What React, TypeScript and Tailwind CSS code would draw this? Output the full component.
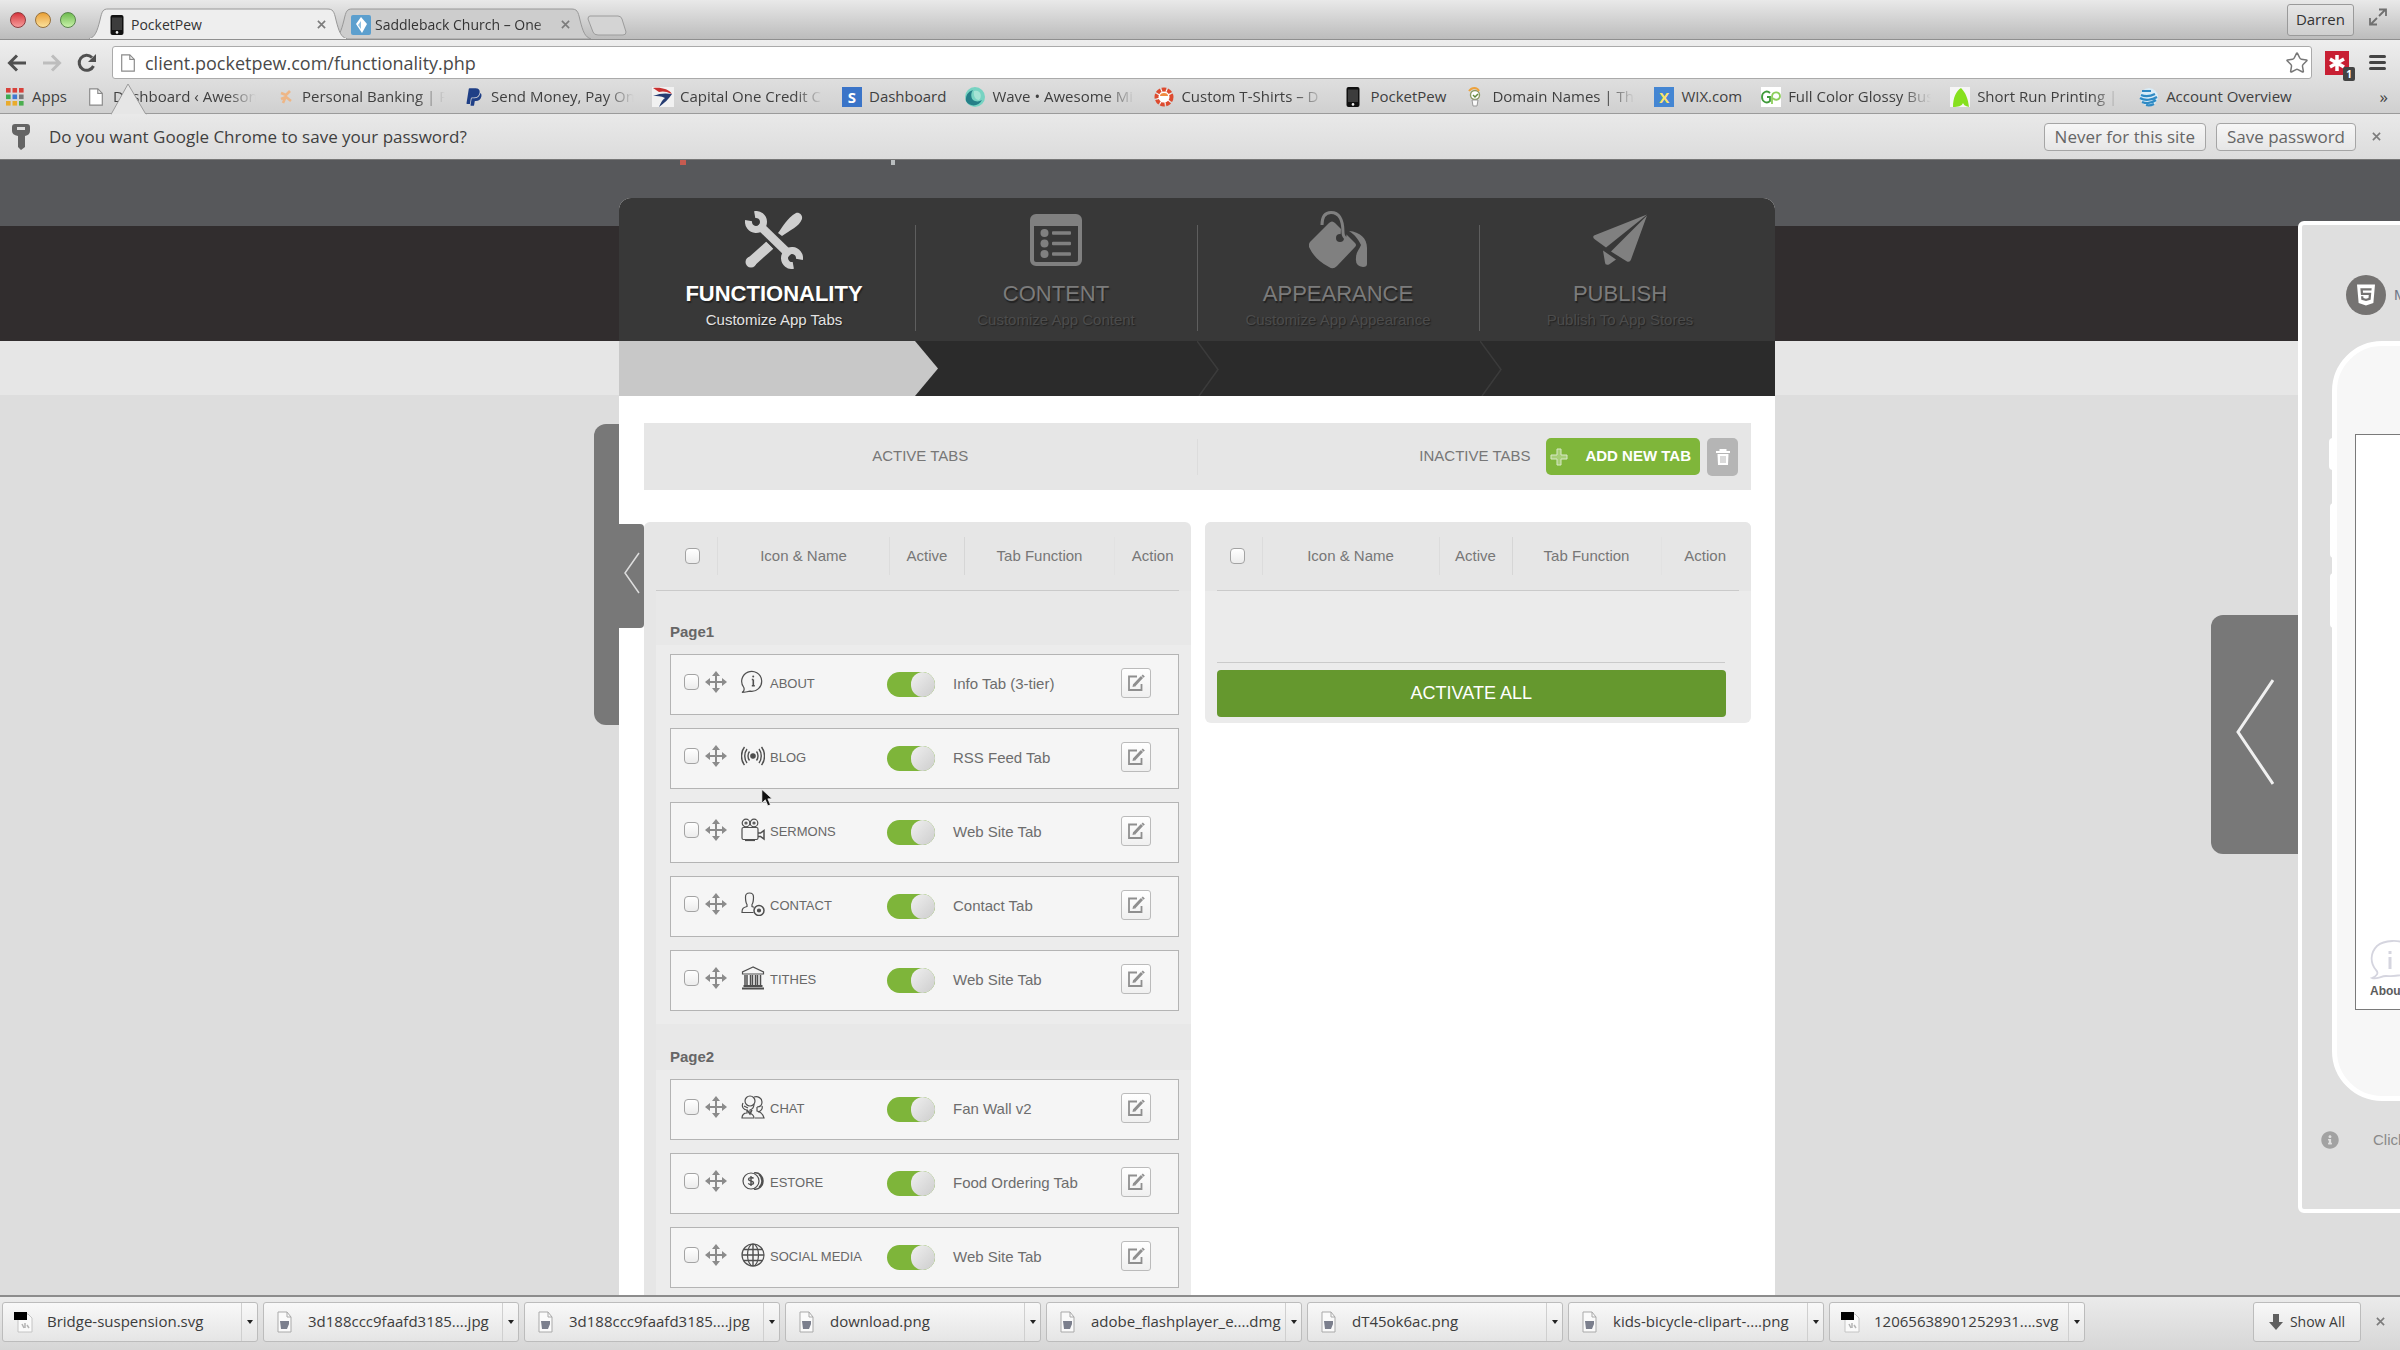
import type { ReactNode } from 'react';
import clsx from 'clsx';
import { FaHtml5, FaInfoCircle, FaPaypal } from 'react-icons/fa';
import { Star } from 'lucide-react';

const CHROME_FONT = "font-['Open_Sans','Lucida_Grande',sans-serif]";
const PAGE_FONT = "font-['Liberation_Sans',Arial,sans-serif]";

/* ---------- Small icons ---------- */

function FileIcon() {
  return (
    <svg viewBox="0 0 16 20" className="h-[18px] w-4">
      <path d="M1 1h9l5 5v13H1z" fill="#fff" stroke="#8a8a8a" strokeWidth="1.3" />
      <path d="M10 1v5h5" fill="none" stroke="#8a8a8a" strokeWidth="1.3" />
    </svg>
  );
}

function PhoneIcon() {
  return (
    <svg viewBox="0 0 13 20" className="h-5 w-[14px]">
      <rect width="13" height="20" rx="2" fill="#111" />
      <rect x="1.5" y="2.5" width="10" height="12.5" fill="#3c3c3c" />
      <circle cx="6.5" cy="17.4" r="1.3" fill="#eee" />
    </svg>
  );
}

function AppsIcon() {
  const colors = ['#d8413a', '#d8413a', '#d8413a', '#3cab52', '#3f78d1', '#777', '#e9ab2c', '#e9ab2c', '#4cae50'];
  return (
    <svg viewBox="0 0 18 18" className="h-[18px] w-[18px]">
      {colors.map((c, i) => (
        <rect key={i} x={(i % 3) * 6.5} y={Math.floor(i / 3) * 6.5} width="4.6" height="4.6" fill={c} />
      ))}
    </svg>
  );
}

function SquiggleIcon() {
  return (
    <svg viewBox="0 0 20 20" className="h-5 w-5">
      <path d="M6 6l5 2 4-4M6 12l5-2 5 4M8 16l3-7" stroke="#f2b078" strokeWidth="2.6" fill="none" opacity=".85" />
    </svg>
  );
}

function CapitalIcon() {
  return (
    <svg viewBox="0 0 22 20" className="h-5 w-[22px]">
      <rect width="22" height="20" fill="#f1f1f1" />
      <path d="M1 1c8-1 16 1 19 6-6-3-10-3-13-2z" fill="#c9302f" />
      <path d="M1 9c7-3 13-3 19-2-3 5-8 9-13 13 2-5 4-8 6-9-4-2-8-2-12-2z" fill="#253c72" />
    </svg>
  );
}

function SquareIcon({ bg, letter, color }: { bg: string; letter: string; color: string }) {
  return (
    <span className={clsx('flex h-5 w-5 items-center justify-center text-[15px] font-bold leading-5', bg, color)}>
      {letter}
    </span>
  );
}

function GlossyIcon() {
  return (
    <svg viewBox="0 0 20 20" className="h-5 w-5">
      <rect width="20" height="20" fill="#fff" />
      <path d="M9 6C6 3 1 5 1 10s5 7 8 4v-4H6" stroke="#3f9a3a" strokeWidth="1.8" fill="none" />
      <path d="M11 17V10c0-6 8-6 8-1 0 4-5 5-7 2" stroke="#8ccf5a" strokeWidth="1.8" fill="none" />
    </svg>
  );
}

function WaveIcon() {
  return (
    <svg viewBox="0 0 20 20" className="h-5 w-5">
      <circle cx="10" cy="10" r="10" fill="#77d3c2" />
      <path d="M1 14A9.5 9.5 0 0 1 8 3c-3 4-2 10 2 11 3 1 5 0 7-1-3 7-13 7-16 1z" fill="#257f88" />
      <path d="M9 4c6-2 9 5 5 9-4 0-6-5-5-9z" fill="#a5e3d5" />
    </svg>
  );
}

function RingIcon() {
  return (
    <svg viewBox="0 0 20 20" className="h-5 w-5">
      <circle cx="10" cy="10" r="7.5" fill="#fff" stroke="#dd4b2f" strokeWidth="4" strokeDasharray="4.2 1.3" />
      <path d="M6 9a4 3 0 0 1 8 0z" fill="#f08b43" />
    </svg>
  );
}

function DomainIcon() {
  return (
    <svg viewBox="0 0 16 20" className="h-5 w-4">
      <circle cx="8" cy="8" r="4.5" fill="#fff" stroke="#8d9b63" strokeWidth="1.4" />
      <path d="M2 4c3-4 8-4 10 0" stroke="#eda23d" strokeWidth="2" fill="none" />
      <path d="M5 13h6l-1 6H6z" fill="#fafafa" stroke="#999" />
      <path d="M6 8l2 2 3-3" stroke="#61883a" strokeWidth="1.5" fill="none" />
    </svg>
  );
}

function LeafIcon() {
  return (
    <svg viewBox="0 0 20 20" className="h-5 w-5">
      <rect width="20" height="20" fill="#f6f6f6" />
      <path d="M3 20C3 11 6 4 11 1c5 5 7 11 8 19-4-1-5-2-6-4-1 3-5 4-10 4z" fill="#86e01e" />
    </svg>
  );
}

function GlobeStripes() {
  return (
    <svg viewBox="0 0 20 20" className="h-5 w-5">
      <circle cx="10" cy="10" r="9" fill="#d9ecf7" />
      <path d="M3 4h9M2 8c5 2 10 1 14-1M1 11c5 3 12 2 17-1M3 15c5 2 10 1 14-2M7 18c3 1 6 0 8-1" stroke="#2f8ac4" strokeWidth="2.2" fill="none" />
    </svg>
  );
}

function MoveIcon() {
  return (
    <svg viewBox="0 0 22 22" className="h-[22px] w-[22px]" fill="#8b8b8b">
      <path d="M10 4h2v6h6v2h-6v6h-2v-6H4v-2h6z" />
      <path d="M11 0l4 5H7zM11 22l-4-5h8zM0 11l5-4v8zM22 11l-5 4V7z" />
    </svg>
  );
}

function EditIcon() {
  return (
    <svg viewBox="0 0 18 18" className="h-[18px] w-[18px]" fill="none" stroke="#8f8f8f">
      <path d="M10 2.5H2v13.5h12.5V10" strokeWidth="1.8" />
      <path d="M7 11.5L15 3" strokeWidth="3" />
      <path d="M5.5 13l.6-3 2.4 2.2z" fill="#8f8f8f" stroke="none" />
      <path d="M15.2 1.2l2 2" strokeWidth="1.8" />
    </svg>
  );
}

function TrashIcon() {
  return (
    <svg viewBox="0 0 14 16" className="h-4 w-[14px]">
      <path d="M0 3h14M4.500 2.500V1h5v1.500" stroke="#fff" strokeWidth="2" fill="none" />
      <path d="M1.500 5h11L12 16H2z" fill="#fff" />
      <path d="M5 7v7M7 7v7M9 7v7" stroke="#b5b5b5" strokeWidth="1" />
    </svg>
  );
}

/* ---------- Tab icons ---------- */

function LineIcon({ children }: { children: ReactNode }) {
  return (
    <svg viewBox="0 0 24 24" className="h-6 w-6" fill="none" stroke="#4f4f4f" strokeWidth="1.2">
      {children}
    </svg>
  );
}

const infoIcon = (
  <LineIcon>
    <path d="M1 22.500c2-1 2.500-3 1.800-5A10 10 0 1 1 9 21.200c-2.500.3-5 1.300-8 1.300z" />
    <path d="M12.300 9.500v6M10.800 15.800h3M10.800 9.500h1.500" strokeWidth="1.600" />
    <circle cx="12.200" cy="6.500" r="1" fill="#4f4f4f" stroke="none" />
  </LineIcon>
);

const blogIcon = (
  <LineIcon>
    <circle cx="12" cy="12" r="2.200" fill="#4f4f4f" />
    <path d="M8.500 7.500c-2 2.500-2 6.500 0 9M15.500 7.500c2 2.500 2 6.500 0 9M6 5c-3 4-3 10 0 14M18 5c3 4 3 10 0 14M3.500 3c-4 5-4 13 0 18M20.500 3c4 5 4 13 0 18" strokeWidth="1.400" />
  </LineIcon>
);

const cameraIcon = (
  <LineIcon>
    <circle cx="5" cy="5" r="3.800" />
    <circle cx="13" cy="5" r="3.800" />
    <circle cx="5" cy="5" r="1" />
    <circle cx="13" cy="5" r="1" />
    <rect x="1" y="9.500" width="16" height="12" rx="1.500" />
    <path d="M17 15h2.500l3.500-2.500v8.500l-3.500-2.500H17" strokeWidth="1.500" />
    <path d="M4 22.500h10" />
  </LineIcon>
);

const contactIcon = (
  <LineIcon>
    <path d="M12.500 20.500H1c0-4 1-5 5-6v-2C4.500 10.500 4.500 8 4.500 5 4.500 2 6 1 8.500 1S12.500 2 12.500 5c0 3 0 5.500-1.500 7.500v2l2 .7" />
    <circle cx="18" cy="18.500" r="5" strokeWidth="1.500" />
    <circle cx="18" cy="18.500" r="1.500" fill="#4f4f4f" />
  </LineIcon>
);

const bankIcon = (
  <LineIcon>
    <path d="M12 1L1.500 6v2h21V6z" />
    <path d="M4 9v10M6 9v10M9.500 9v10M11.500 9v10M14.500 9v10M16.500 9v10M19.500 9v10" strokeWidth="1.500" />
    <path d="M2.500 20h19M1 22.500h22" strokeWidth="1.800" />
  </LineIcon>
);

const chatIcon = (
  <LineIcon>
    <circle cx="9" cy="6" r="5" />
    <path d="M13 2c4-1 8 1 8 5s-3 5-5 5M2 8c-2 4 1 7 4 7v3c-3 0-5 2-5 5h12c0-3-2-4-4-5v-3c3-1 4-3 4-6" />
    <path d="M16 12v4c4 1 6 3 7 7h-9M21 11c1 3-1 5-4 6M3 11l4 2" />
    <path d="M6 15l3 4 2-4" strokeWidth="1.500" />
  </LineIcon>
);

const storeIcon = (
  <LineIcon>
    <circle cx="10" cy="12" r="8" />
    <path d="M13 4c5-1 9 3 9 8s-4 9-9 8M18 5.500c4 3 4 10 0 13" strokeWidth="1.500" />
    <path d="M12.500 9.500c-1-1.500-5-1.200-5 .7 0 2.200 5 1.300 5 3.600 0 2-4 2.200-5.200.5M10 7v10" strokeWidth="1.400" />
  </LineIcon>
);

const globeIcon = (
  <LineIcon>
    <circle cx="12" cy="12" r="11" />
    <ellipse cx="12" cy="12" rx="5.500" ry="11" />
    <path d="M12 1v22M1 12h22M3 6.500h18M3 17.500h18" strokeWidth="1.400" />
  </LineIcon>
);

/* ---------- Step icons ---------- */

const toolsIcon = (
  <svg viewBox="0 0 58 58" className="h-[58px] w-[58px]">
    <path d="M6 51L25 34" stroke="#cfcfcf" strokeWidth="10" />
    <circle cx="6" cy="51" r="5.500" fill="#cfcfcf" />
    <path d="M33 22c4-5 9-15 18-20 3-1 7 2 6 6-3 8-12 11-20 17z" fill="#cfcfcf" />
    <path d="M14 15L45 44" stroke="#383838" strokeWidth="13" />
    <path d="M14 14L45 44" stroke="#cfcfcf" strokeWidth="8.500" />
    <path d="M9.700 3.600A7.500 7.500 0 1 1 3.600 9.700M48.300 54.400A7.500 7.500 0 1 1 54.400 48.300" stroke="#cfcfcf" strokeWidth="7" fill="none" />
  </svg>
);

const listIcon = (
  <svg viewBox="0 0 52 52" className="h-[52px] w-[52px]">
    <rect x="2" y="2" width="48" height="48" rx="4" fill="none" stroke="#808080" strokeWidth="4" />
    <rect x="2" y="2" width="48" height="10" fill="#808080" />
    {[19, 29.5, 40].map((y) => (
      <g key={y} fill="#808080">
        <circle cx="14.500" cy={y} r="4" />
        <rect x="22" y={y - 1.8} width="19" height="3.600" rx="1" />
      </g>
    ))}
  </svg>
);

const bucketIcon = (
  <svg viewBox="0 0 58 58" className="h-[58px] w-[58px]">
    <path d="M1 31L20 12q3-3 6 0l20 20q2 2 0 4L28 55q-4 4-8 1Q6 49 0 36q-1-2 1-5z" fill="#808080" />
    <path d="M34 12c2 5 1 10 0 15" stroke="#383838" strokeWidth="6" fill="none" />
    <circle cx="31" cy="27" r="4" fill="#383838" />
    <path d="M13 14C13 5 17 1.500 22 1.500c9 0 12 8 12 20 0 3 1 5 4 7" stroke="#808080" strokeWidth="3" fill="none" />
    <path d="M40 20c11 1 18 7 18 17v16q0 3-4 3-8-1-7-9c0-6 3-8 5-13-3-6-6-10-12-14z" fill="#808080" />
  </svg>
);

const planeIcon = (
  <svg viewBox="0 0 54 51" className="h-[52px] w-[54px]" fill="#808080">
    <path d="M54 0L1 21q-2 2 1 4l11 8L48 5z" />
    <path d="M54 1L18 37l16 10q3 1 4-2z" />
    <path d="M10 36l13 9-7 5q-4 1-4-2z" />
  </svg>
);

/* ---------- Data ---------- */

const bookmarks: { label: string; icon: ReactNode; fade?: boolean }[] = [
  { label: 'Apps', icon: <AppsIcon /> },
  { label: 'Dashboard ‹ Aweson', icon: <FileIcon />, fade: true },
  { label: 'Personal Banking | P', icon: <SquiggleIcon />, fade: true },
  { label: 'Send Money, Pay On', icon: <FaPaypal className="h-5 w-4 text-[#1f3f86]" />, fade: true },
  { label: 'Capital One Credit C', icon: <CapitalIcon />, fade: true },
  { label: 'Dashboard', icon: <SquareIcon bg="bg-[#3a74c8]" letter="S" color="text-white" /> },
  { label: 'Wave • Awesome Mi', icon: <WaveIcon />, fade: true },
  { label: 'Custom T-Shirts – D', icon: <RingIcon />, fade: true },
  { label: 'PocketPew', icon: <PhoneIcon /> },
  { label: 'Domain Names | The', icon: <DomainIcon />, fade: true },
  { label: 'WIX.com', icon: <SquareIcon bg="bg-[#4486d3]" letter="X" color="text-[#fbe46a]" /> },
  { label: 'Full Color Glossy Bus', icon: <GlossyIcon />, fade: true },
  { label: 'Short Run Printing |', icon: <LeafIcon />, fade: true },
  { label: 'Account Overview', icon: <GlobeStripes /> },
];

const steps = [
  { title: 'FUNCTIONALITY', sub: 'Customize App Tabs', icon: toolsIcon, active: true },
  { title: 'CONTENT', sub: 'Customize App Content', icon: listIcon },
  { title: 'APPEARANCE', sub: 'Customize App Appearance', icon: bucketIcon },
  { title: 'PUBLISH', sub: 'Publish To App Stores', icon: planeIcon },
];

const pages = [
  {
    name: 'Page1',
    tabs: [
      { name: 'ABOUT', fn: 'Info Tab (3-tier)', icon: infoIcon },
      { name: 'BLOG', fn: 'RSS Feed Tab', icon: blogIcon },
      { name: 'SERMONS', fn: 'Web Site Tab', icon: cameraIcon },
      { name: 'CONTACT', fn: 'Contact Tab', icon: contactIcon },
      { name: 'TITHES', fn: 'Web Site Tab', icon: bankIcon },
    ],
  },
  {
    name: 'Page2',
    tabs: [
      { name: 'CHAT', fn: 'Fan Wall v2', icon: chatIcon },
      { name: 'ESTORE', fn: 'Food Ordering Tab', icon: storeIcon },
      { name: 'SOCIAL MEDIA', fn: 'Web Site Tab', icon: globeIcon },
    ],
  },
];

const downloads = [
  { name: 'Bridge-suspension.svg', svg: true },
  { name: '3d188ccc9faafd3185....jpg' },
  { name: '3d188ccc9faafd3185....jpg' },
  { name: 'download.png' },
  { name: 'adobe_flashplayer_e....dmg' },
  { name: 'dT45ok6ac.png' },
  { name: 'kids-bicycle-clipart-....png' },
  { name: '12065638901252931....svg', svg: true },
];

/* ---------- Browser chrome ---------- */

function CloseX({ label }: { label: string }) {
  return (
    <button aria-label={label} className="flex h-4 w-4 items-center justify-center">
      <svg viewBox="0 0 10 10" className="h-[9px] w-[9px]">
        <path d="M1 1l8 8M9 1L1 9" stroke="#7c7c7c" strokeWidth="1.800" />
      </svg>
    </button>
  );
}

function BrowserTab({ title, icon, active }: { title: string; icon: ReactNode; active?: boolean }) {
  return (
    <div className={clsx('relative h-[31px] w-[258px]', active ? 'z-10' : '-ml-[14px]')}>
      <svg viewBox="0 0 258 31" preserveAspectRatio="none" className="absolute inset-0 h-full w-full">
        <path
          d="M0 31C6 29 8 24 11 12 13 3 14 1 19 1H238c6 0 7 2 9 11 3 12 5 17 11 19z"
          fill={active ? '#eeeeee' : '#cdcdcd'}
          stroke="#989898"
        />
        {active && <path d="M1 31h256" stroke="#eeeeee" strokeWidth="2" />}
      </svg>
      <div className="relative flex h-full items-center gap-1 pl-[18px] pr-[17px] pt-[2px]">
        <span className="flex w-5 justify-center">{icon}</span>
        <span
          className={clsx(
            'w-[178px] overflow-hidden whitespace-nowrap text-[14px] text-[#333]',
            !active && 'mask-r-from-90%'
          )}
        >
          {title}
        </span>
        <CloseX label={`Close ${title}`} />
      </div>
    </div>
  );
}

function TitleBar() {
  return (
    <div className="flex h-10 items-end border-b border-[#8f8f8f] bg-linear-to-b from-[#e9e9e9] to-[#bcbcbc] pl-[10px]">
      <div className="flex gap-[9px] self-center pr-[13px]">
        <span className="h-4 w-4 rounded-full border border-[#8d3a3d] bg-linear-to-b from-[#d5303d] to-[#f59a9c]" />
        <span className="h-4 w-4 rounded-full border border-[#98713a] bg-linear-to-b from-[#e9a032] to-[#fbe19a]" />
        <span className="h-4 w-4 rounded-full border border-[#57854a] bg-linear-to-b from-[#6dbb4e] to-[#c9f2a9]" />
      </div>
      <BrowserTab title="PocketPew" icon={<PhoneIcon />} active />
      <BrowserTab
        title="Saddleback Church – One"
        icon={
          <svg viewBox="0 0 20 20" className="h-5 w-5">
            <rect width="20" height="20" rx="2" fill="#5c9fce" />
            <path d="M10 2l6 7-5 9-6-9z" fill="#fff" />
            <path d="M10 6v8l-3-4z" fill="#8fc1e2" />
          </svg>
        }
      />
      <button aria-label="New tab" className="-ml-1 mb-[3px]">
        <svg viewBox="0 0 40 21" className="h-[21px] w-10">
          <path d="M3 1h28q3 0 4 3l4 13q0 3-3 3H11q-4 0-5-3L1 4q0-3 2-3z" fill="#d4d4d4" stroke="#9c9c9c" />
        </svg>
      </button>
      <div className="ml-auto flex h-full items-center gap-[14px] pr-3">
        <button className="h-8 rounded-[3px] border border-[#9a9a9a] bg-linear-to-b from-[#e6e6e6] to-[#cfcfcf] px-2 text-[15px] text-[#333]">
          Darren
        </button>
        <button aria-label="Full screen" className="pb-1.5">
          <svg viewBox="0 0 20 18" className="h-[18px] w-5" stroke="#707070" strokeWidth="1.800" fill="none">
            <path d="M11 8l6-6M11 1.500h7V8M9 10l-6 6M2 10v6.500h7" />
          </svg>
        </button>
      </div>
    </div>
  );
}

function Toolbar() {
  return (
    <div className="flex h-10 items-center bg-linear-to-b from-[#eeeeee] to-[#dedede] pr-[14px] pt-[5px]">
      <div className="flex w-[112px] items-center gap-[15px] pl-[7px]">
        <button aria-label="Back">
          <svg viewBox="0 0 20 18" className="h-[18px] w-5" stroke="#505050" strokeWidth="3" fill="none">
            <path d="M19 9H3M10 1.500L2.500 9l7.500 7.500" />
          </svg>
        </button>
        <button aria-label="Forward">
          <svg viewBox="0 0 20 18" className="h-[18px] w-5" stroke="#bdbdbd" strokeWidth="3" fill="none">
            <path d="M1 9h16M10 1.500L17.500 9 10 16.500" />
          </svg>
        </button>
        <button aria-label="Reload">
          <svg viewBox="0 0 20 20" className="h-5 w-5">
            <path d="M16.500 13A7.500 7.500 0 1 1 15 4.500" stroke="#505050" strokeWidth="3" fill="none" />
            <path d="M19 1v8h-8z" fill="#505050" />
          </svg>
        </button>
      </div>
      <div className="flex h-[33px] flex-1 items-center gap-[9px] rounded-[3px] border border-[#aaa] bg-white pl-[7px] pr-[2px]">
        <FileIcon />
        <input
          aria-label="Address"
          defaultValue="client.pocketpew.com/functionality.php"
          className="h-7 flex-1 bg-transparent text-[18px] text-[#4a4a4a] outline-none"
        />
        <Star className="h-6 w-6 text-[#777]" strokeWidth={1.5} />
      </div>
      <button aria-label="Extension" className="relative ml-[13px] flex h-6 w-6 items-center justify-center bg-[#c81f33] text-white">
        <svg viewBox="0 0 16 16" className="h-4 w-4" stroke="#fff" strokeWidth="3.500">
          <path d="M8 0v16M1 4l14 8M15 4L1 12" />
        </svg>
        <span className="absolute -bottom-1.5 -right-1.5 h-[14px] w-3 rounded-[2px] bg-[#444] text-[10px] font-bold leading-[14px]">1</span>
      </button>
      <button aria-label="Menu" className="ml-5 flex w-[17px] flex-col gap-[3px]">
        <span className="h-[3px] rounded bg-[#444]" />
        <span className="h-[3px] rounded bg-[#444]" />
        <span className="h-[3px] rounded bg-[#444]" />
      </button>
    </div>
  );
}

function BookmarksBar() {
  return (
    <nav className="flex h-[34px] items-center gap-[18px] border-b border-[#9b9b9b] bg-linear-to-b from-[#dedede] to-[#d0d0d0] pl-1 pr-3">
      {bookmarks.map(({ label, icon, fade }, i) => (
        <a key={i} href="#" className="flex items-center gap-1.5 text-[15px] text-[#3f3f3f]">
          <span className="flex w-[22px] shrink-0 justify-center">{icon}</span>
          <span className={clsx('whitespace-nowrap', fade && 'w-[143px] mask-r-from-80%')}>{label}</span>
        </a>
      ))}
      <button aria-label="More bookmarks" className="ml-auto text-[17px] text-[#444]">
        »
      </button>
    </nav>
  );
}

function PasswordBar() {
  return (
    <div className="relative flex h-[46px] items-center border-b border-[#777] bg-linear-to-b from-[#e9e9e9] to-[#dcdcdc] pl-3 pr-4 text-[17px] text-[#3f3f3f]">
      <svg viewBox="0 0 36 33" className="absolute -top-[31px] left-[111px] h-[33px] w-9">
        <path d="M0 31.500L17 1l18 30.500" fill="#e6e6e6" stroke="#9b9b9b" />
        <path d="M1 32h34" stroke="#e9e9e9" strokeWidth="2" />
      </svg>
      <svg viewBox="0 0 18 26" className="h-[26px] w-[18px]">
        <path d="M3 0h12q3 0 3 3v4q0 4-5 5v11l-4 3-3-3V12Q0 11 0 7V3q0-3 3-3z" fill="#646464" />
        <rect x="5" y="3" width="8" height="3" fill="#dcdcdc" />
      </svg>
      <p className="pl-[19px]">Do you want Google Chrome to save your password?</p>
      <div className="ml-auto flex items-center gap-[10px] text-[#666]">
        <button className="h-7 rounded border border-[#a5a5a5] bg-linear-to-b from-[#f7f7f7] to-[#e6e6e6] px-[10px] leading-6">
          Never for this site
        </button>
        <button className="mr-[2px] h-7 rounded border border-[#a5a5a5] bg-linear-to-b from-[#f7f7f7] to-[#e6e6e6] px-[10px] leading-6">
          Save password
        </button>
        <CloseX label="Dismiss" />
      </div>
    </div>
  );
}

function DownloadBar() {
  return (
    <footer
      className={clsx(
        'flex h-[55px] shrink-0 items-center gap-[5px] border-t-2 border-[#8c8c8c] bg-linear-to-b from-[#ebebeb] to-[#d6d6d6] pb-1 pl-[2px] pr-3 text-[15px] text-[#3c3c3c]',
        CHROME_FONT
      )}
    >
      {downloads.map(({ name, svg }, i) => (
        <div key={i} className="flex h-10 w-64 items-stretch rounded-[3px] border border-[#bcbcbc] bg-linear-to-b from-[#f8f8f8] to-[#e5e5e5]">
          <button className="flex flex-1 items-center gap-[13px] pl-[11px] text-left">
            {svg ? (
              <svg viewBox="0 0 20 22" className="h-[22px] w-5">
                <path d="M4 3h10l4 4v14H4z" fill="#fafafa" stroke="#c4c4c4" />
                <path d="M8 13l2 4M11 12v5M13 14l2 3" stroke="#b4b4b4" strokeWidth="1.500" />
                <path d="M0 1h13v8H0z" fill="#000" />
              </svg>
            ) : (
              <svg viewBox="0 0 20 22" className="h-[22px] w-5">
                <path d="M3 1h9l4 5v15H3z" fill="#fafafa" stroke="#a9a9a9" />
                <path d="M12 1v5h4" fill="none" stroke="#a9a9a9" />
                <path d="M5 10h9v3l-2 5H6z" fill="#7b7f8d" />
              </svg>
            )}
            <span className="whitespace-nowrap">{name}</span>
          </button>
          <button aria-label={`Options for ${name}`} className="flex w-4 items-center justify-center border-l border-[#cfcfcf]">
            <span className="border-x-[3px] border-t-4 border-x-transparent border-t-[#222]" />
          </button>
        </div>
      ))}
      <button className="ml-auto flex h-10 items-center gap-[7px] rounded-[3px] border border-[#bcbcbc] bg-linear-to-b from-[#f8f8f8] to-[#e5e5e5] px-[15px] text-[14px]">
        <svg viewBox="0 0 14 16" className="h-4 w-[14px]">
          <path d="M4 0h6v8h4l-7 8-7-8h4z" fill="#5f5f5f" />
        </svg>
        Show All
      </button>
      <span className="pl-[6px]">
        <CloseX label="Close downloads" />
      </span>
    </footer>
  );
}

/* ---------- Page ---------- */

function Steps() {
  return (
    <>
      <nav className="grid h-[143px] grid-cols-4 rounded-t-xl bg-[#383838] px-[14px]">
        {steps.map(({ title, sub, icon, active }, i) => (
          <a key={title} href="#" className="relative flex flex-col items-center pt-3">
            <span className="flex h-[60px] items-center justify-center">{icon}</span>
            <span
              className={clsx(
                'mt-[10px] text-[22px] leading-7 [text-shadow:1px_2px_1px_#222]',
                active ? 'font-bold text-white' : 'text-[#7b7b7b]'
              )}
            >
              {title}
            </span>
            <span className={clsx('text-[15px] leading-6 [text-shadow:1px_1px_1px_#222]', active ? 'text-[#e3e3e3]' : 'text-[#4c4c4c]')}>
              {sub}
            </span>
            {i < 3 && <span className="absolute -right-px bottom-[10px] top-[27px] w-px bg-[#5e5e5e]" />}
          </a>
        ))}
      </nav>
      <div className="flex h-[55px] bg-[#2b2b2b]">
        <div className="w-[296px] bg-[#c8c8c8]" />
        <svg viewBox="0 0 23 55" className="h-[55px] w-[23px]">
          <path d="M0 0l23 27.500L0 55z" fill="#c8c8c8" />
        </svg>
        <div className="flex flex-1 gap-[260px] pl-[259px]">
          {[0, 1].map((i) => (
            <svg key={i} viewBox="0 0 23 55" className="h-[55px] w-[23px]">
              <path d="M0 0l21 28.500L2 55" fill="none" stroke="#3b3b3b" strokeWidth="1.500" />
            </svg>
          ))}
        </div>
      </div>
    </>
  );
}

function Check({ label }: { label: string }) {
  return (
    <input
      type="checkbox"
      aria-label={label}
      className="h-4 w-[15px] shrink-0 appearance-none rounded-[4px] border border-[#a3a3a3] bg-linear-to-b from-white to-[#ececec]"
    />
  );
}

function TableHead({ className, label }: { className: string; label: string }) {
  return (
    <thead className="block">
      <tr className={clsx('grid h-[69px] items-center border-b border-[#cacaca] *:flex *:h-[38px] *:items-center *:font-normal', className)}>
        <th className="border-r border-[#dcdcdc]">
          <Check label={label} />
        </th>
        <th className="justify-center border-r border-[#dcdcdc]">Icon &amp; Name</th>
        <th className="justify-center border-r border-[#d6d6d6]">Active</th>
        <th className="justify-center border-r border-[#e2e2e2]">Tab Function</th>
        <th className="justify-end">Action</th>
      </tr>
    </thead>
  );
}

function ActiveTabs() {
  return (
    <table className="block rounded-t-md bg-[#e6e6e6] pl-3 text-[15px] text-[#777]">
      <TableHead label="Select all active tabs" className="mr-3 grid-cols-[62px_172px_75px_150px_1fr] [&>th:first-child]:pl-[29px] [&>th:last-child]:pr-[5px]" />
      {pages.map(({ name, tabs }, p) => (
        <tbody key={name} className="block">
          <tr className={clsx('flex items-center bg-[#e8e8e8] pl-[14px]', p === 0 ? 'h-[54px] pt-7' : 'h-[46px] pt-5')}>
            <th className="font-bold text-[#666]">{name}</th>
          </tr>
          <tr className="block h-[9px] bg-[#ececec]" />
          {tabs.map((tab) => (
            <tr key={tab.name} className="block bg-[#ececec] pb-[13px] pl-[14px] pr-3">
              <td className="grid h-[61px] grid-cols-[216px_66px_168px_1fr] items-center border border-[#b4b4b4] bg-[#f5f5f5]">
                <div className="flex items-center pl-[13px]">
                  <div className="flex items-center pb-1.5">
                    <Check label={`Select ${tab.name}`} />
                    <span className="mx-[6px]">
                      <MoveIcon />
                    </span>
                    <span className="ml-2">{tab.icon}</span>
                  </div>
                  <span className="whitespace-nowrap pb-[2px] pl-[5px] text-[13px] text-[#686868]">{tab.name}</span>
                </div>
                <input
                  type="checkbox"
                  role="switch"
                  defaultChecked
                  aria-label={`${tab.name} active`}
                  className="h-[25px] w-12 appearance-none overflow-hidden rounded-full bg-[#7eb53a] before:ml-6 before:block before:h-[25px] before:w-6 before:rounded-full before:bg-linear-to-br before:from-[#f0f0f0] before:to-[#cdcdcd] before:content-['']"
                />
                <span className="whitespace-nowrap text-[#6d6d6d]">{tab.fn}</span>
                <div className="pb-1">
                  <button
                    aria-label={`Edit ${tab.name}`}
                    className="flex h-[30px] w-[30px] items-center justify-center rounded-[3px] border border-[#bbb] bg-linear-to-b from-white to-[#f0f0f0]"
                  >
                    <EditIcon />
                  </button>
                </div>
              </td>
            </tr>
          ))}
        </tbody>
      ))}
    </table>
  );
}

function InactiveTabs() {
  return (
    <div className="self-start overflow-hidden rounded-md bg-[#ebebeb] text-[15px] text-[#777]">
      <table className="block bg-[#e6e6e6] pl-3">
        <TableHead label="Select all inactive tabs" className="mr-3 grid-cols-[46px_177px_73px_149px_1fr] [&>th:first-child]:pl-[13px] [&>th:last-child]:pr-[13px]" />
      </table>
      <div className="ml-3 mr-[26px] h-[72px] border-b border-[#cacaca]" />
      <div className="pb-1.5 pl-3 pr-[25px] pt-[7px]">
        <button className="h-[47px] w-full rounded bg-[#65982e] text-[18px] text-white">ACTIVATE ALL</button>
      </div>
    </div>
  );
}

function SideDrawer() {
  return (
    <div className="absolute -left-[25px] top-[226px] flex h-[301px] items-start">
      <div className="h-full w-[25px] rounded-l-xl bg-[#787878]" />
      <button aria-label="Open drawer" className="mt-[100px] flex h-[104px] w-[25px] items-center justify-center rounded-r-[4px] bg-[#787878] pb-[7px]">
        <svg viewBox="0 0 16 42" className="h-[42px] w-4">
          <path d="M15 1L1 21l14 20" fill="none" stroke="#ddd" strokeWidth="1.500" />
        </svg>
      </button>
    </div>
  );
}

function PhonePreview() {
  return (
    <aside className="absolute right-0 top-[61px] flex h-[992px] w-[189px] items-start overflow-hidden">
      <button aria-label="Show preview" className="mt-[394px] flex h-[239px] w-[87px] shrink-0 items-center justify-center rounded-l-xl bg-[#787878] pb-1.5">
        <svg viewBox="0 0 38 106" className="h-[106px] w-[38px]">
          <path d="M37 1L2 53l35 52" fill="none" stroke="#f0f0f0" strokeWidth="3" />
        </svg>
      </button>
      <div className="h-full w-[400px] shrink-0 rounded-md border-4 border-white bg-[#dfdfdf]">
        <div className="flex items-center gap-2 pl-11 pt-[50px] text-[15px] text-[#6f7788]">
          <span className="flex h-10 w-10 items-center justify-center rounded-full bg-[#757372]">
            <FaHtml5 className="h-6 w-6 text-white" />
          </span>
          Mobile
        </div>
        <div className="relative ml-[30px] mt-[26px] h-[760px] rounded-[50px] border-[5px] border-white bg-[#f7f7f7] pl-[18px] pt-[88px]">
          <span className="absolute -left-2 top-[92px] h-8 w-1 rounded-l bg-white" />
          <span className="absolute -left-[7px] top-[157px] h-[55px] w-1 rounded-l bg-white" />
          <span className="absolute -left-[7px] top-[227px] h-[55px] w-1 rounded-l bg-white" />
          <div className="flex h-[576px] flex-col justify-end border border-[#7a7a7a] bg-white pb-2 pl-[14px]">
            <svg viewBox="0 0 46 42" className="h-[42px] w-[46px]" fill="none" stroke="#d5d5df" strokeWidth="1.800">
              <path d="M2 39c5-2 7-5 4-8C0 24 0 14 7 7 14 1 30 0 38 6c9 8 8 22-1 28-8 4-15 3-21 3-5 0-10 4-14 2z" />
              <path d="M20 12v3M20 18v12" strokeWidth="3" />
            </svg>
            <span className="text-[12px] font-bold leading-5 text-[#5c5c5c]">About</span>
          </div>
        </div>
        <div className="flex items-center gap-[34px] pl-[19px] pt-7 text-[15px] text-[#8a8a8a]">
          <FaInfoCircle className="h-[18px] w-[18px] text-[#a2a2a2]" />
          Click
        </div>
      </div>
    </aside>
  );
}

export default function App() {
  return (
    <div className="flex h-screen flex-col overflow-hidden">
      <header className={clsx('relative z-10 shrink-0', CHROME_FONT)}>
        <TitleBar />
        <Toolbar />
        <BookmarksBar />
        <PasswordBar />
      </header>

      <div className={clsx('relative flex-1 overflow-hidden bg-[#dddddd]', PAGE_FONT)}>
        {/* Background bands behind the editor */}
        <div className="absolute inset-x-0 top-0">
          <div className="flex h-[66px] gap-[205px] bg-[#57585b] pl-[680px]">
            <span className="h-[5px] w-1.5 bg-[#c65b50]" />
            <span className="h-[5px] w-1 bg-[#b9bdbf]" />
          </div>
          <div className="h-[115px] bg-[#312d2e]" />
          <div className="h-[54px] bg-[#e6e6e6]" />
        </div>

        <main className="relative mx-auto flex min-h-full w-full max-w-[1162px] flex-col pr-1.5 pt-[38px]">
          <div className="relative flex flex-1 flex-col rounded-t-xl bg-white">
            <Steps />
            <div className="flex flex-1 flex-col pl-[25px] pr-6 pt-[27px]">
              <div className="grid h-[67px] grid-cols-2 items-center bg-[#e6e6e6] text-[15px] text-[#777]">
                <div className="flex h-9 items-center justify-center border-r border-[#dcdcdc]">
                  <h2>ACTIVE TABS</h2>
                </div>
                <div className="flex items-center justify-end pr-[13px]">
                  <h2 className="pr-4">INACTIVE TABS</h2>
                  <button className="mr-[7px] flex h-[37px] items-center gap-[17px] rounded-[5px] bg-[#7fb63a] pl-1 pr-[9px] font-bold text-white">
                    <svg viewBox="0 0 18 18" className="h-[18px] w-[18px]">
                      <path d="M7 1h4v6h6v4h-6v6H7v-6H1V7h6z" fill="#a7cf77" stroke="#d9e8c8" />
                    </svg>
                    ADD NEW TAB
                  </button>
                  <button aria-label="Delete" className="flex h-[38px] w-[31px] items-center justify-center rounded-[5px] bg-[#b5b5b5]">
                    <TrashIcon />
                  </button>
                </div>
              </div>
              <div className="mt-8 grid flex-1 grid-cols-2 gap-[14px]">
                <ActiveTabs />
                <InactiveTabs />
              </div>
            </div>
            <SideDrawer />
          </div>
        </main>

        <PhonePreview />

        <svg viewBox="0 0 14 20" className="absolute left-[761px] top-[629px] h-[18px] w-3">
          <path d="M1 0v16l4-4 3 7 3-1-3-7h5z" fill="#111" stroke="#fff" strokeWidth=".8" />
        </svg>
      </div>

      <DownloadBar />
    </div>
  );
}
